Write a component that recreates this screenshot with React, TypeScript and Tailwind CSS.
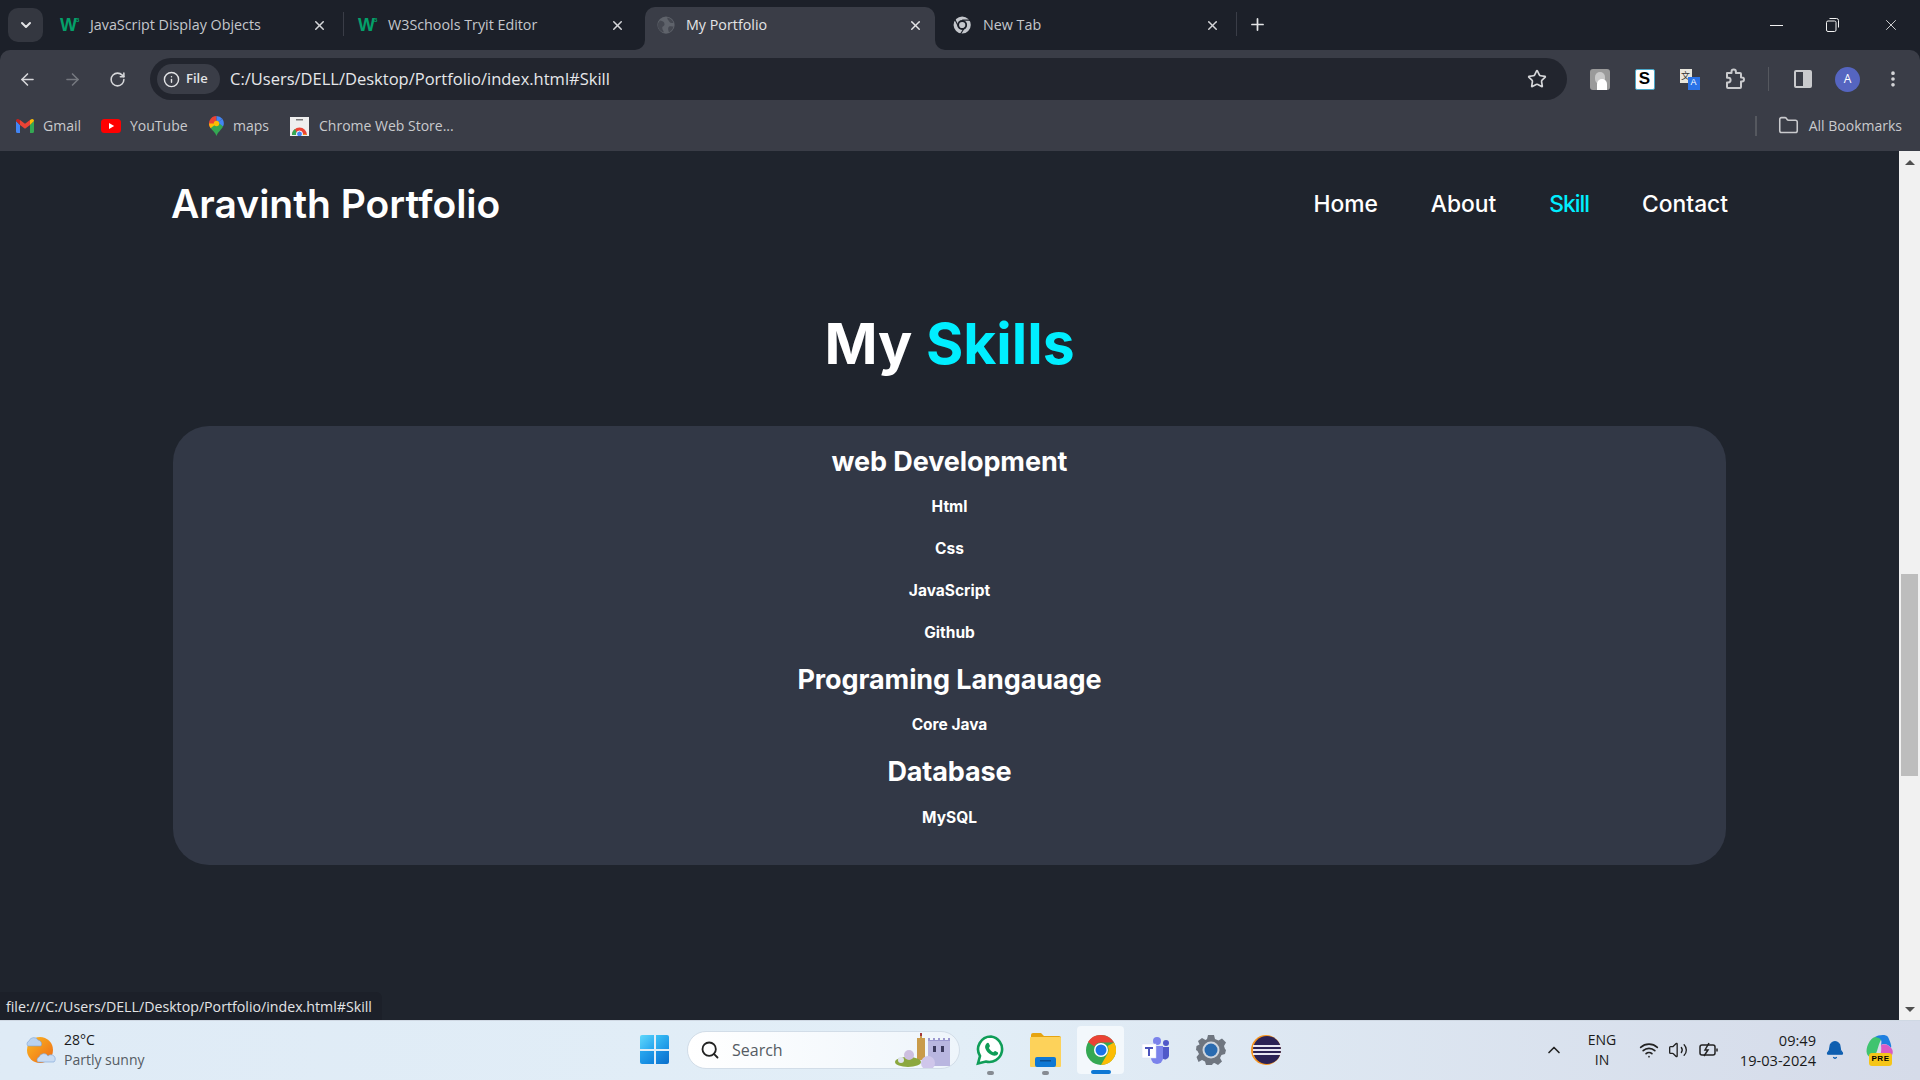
import {
  ArrowLeft,
  ArrowRight,
  RotateCw,
  Info,
  Star,
  Folder,
  Search,
  Wifi,
  Volume2,
  X,
  Plus,
  ChevronDown,
  ChevronUp,
  Bell,
  EllipsisVertical,
} from 'lucide-react';

// ===============================
// LOGOS
// ===============================

function W3Icon() {
  return (
    <span className="flex w-[20px] shrink-0 items-start font-['Liberation_Sans',sans-serif] font-bold text-[#04a06a]">
      <span className="text-[18px] leading-[18px]">W</span>
      <span className="-ml-[1px] text-[6px] leading-[8px]">3</span>
    </span>
  );
}

function ChromeMono() {
  return (
    <svg width="20" height="18" viewBox="0 0 24 22" className="shrink-0">
      <circle cx="11" cy="11" r="10.500" fill="#c4c7cc" />
      <circle cx="11" cy="11" r="6" fill="#1c2029" />
      <circle cx="11" cy="11" r="3.800" fill="#c4c7cc" />
      <path d="M11 5h10M7 14 2 4M14 14l-5 8" stroke="#1c2029" strokeWidth="1.400" />
    </svg>
  );
}

function GlobeMono() {
  return (
    <span className="flex w-[20px] shrink-0 justify-center">
      <svg width="18" height="18" viewBox="0 0 24 24">
        <circle cx="12" cy="12" r="11.500" fill="#5f636b" />
        <path d="M4 6c4 1 6 2 6 5s-3 2-3 5 2 3 2 6c-4-1-8-5-8-10 0-2 1-4 3-6ZM14 2c4 1 7 4 8 7-3 1-5 0-6-2s-3-3-2-5ZM16 14c3-1 5 0 6 0-1 4-3 6-6 8-1-3-2-6 0-8Z" fill="#454851" />
      </svg>
    </span>
  );
}

function GmailIcon() {
  return (
    <svg width="18" height="14" viewBox="0 0 18 14" className="shrink-0">
      <path d="M0 2v10.500A1.500 1.500 0 0 0 1.500 14H4V6Z" fill="#4285f4" />
      <path d="M14 6v8h2.500a1.500 1.500 0 0 0 1.500-1.500V2Z" fill="#34a853" />
      <path d="M4 6 9 9.700 14 6V1L9 4.700 4 1Z" fill="#ea4335" />
      <path d="M0 2 4 6V1L2.500.3C1.300-.4 0 .6 0 2Z" fill="#c5221f" />
      <path d="M14 1v5l4-4c0-1.400-1.300-2.400-2.500-1.700Z" fill="#fbbc04" />
    </svg>
  );
}

function YoutubeIcon() {
  return (
    <svg width="20" height="14" viewBox="0 0 20 14" className="shrink-0">
      <rect width="20" height="14" rx="3.500" fill="#f00" />
      <path d="m8 4 5.200 3L8 10Z" fill="#fff" />
    </svg>
  );
}

function MapsIcon() {
  return (
    <svg width="15" height="20" viewBox="0 0 15 20" className="shrink-0">
      <path d="M7.500 0A7.500 7.500 0 0 0 1.700 12.200L7.500 5Z" fill="#ea4335" />
      <path d="M7.500 0A7.500 7.500 0 0 1 13.300 2.800L7.500 7.500Z" fill="#4285f4" />
      <path d="M13.300 2.800A7.500 7.500 0 0 1 14 10.500L7.500 7.500Z" fill="#4285f4" />
      <path d="M1.700 12.200 7.500 5 14 10.500C12.500 14 9 15.500 7.500 20 6.500 16.500 3.500 14.500 1.700 12.200Z" fill="#34a853" />
      <path d="M1.700 12.200A7.500 7.500 0 0 1 0 7.500L7.500 7.500Z" fill="#fbbc04" />
      <circle cx="7.500" cy="7.500" r="2.700" fill="#fbbc04" />
    </svg>
  );
}

function StoreIcon() {
  return (
    <svg width="20" height="20" viewBox="0 0 20 20" className="shrink-0">
      <rect y="1" width="19" height="19" fill="#eee" />
      <rect x="6" y="3" width="7" height="1.500" fill="#777" />
      <path d="M2 19a7.500 7.500 0 0 1 15 0Z" fill="#ea4335" />
      <path d="M12 19a5 5 0 0 1 5 0Z" fill="#fbbc04" />
      <path d="M2 19a7 7 0 0 1 3-6l3 6Z" fill="#34a853" />
      <circle cx="9.500" cy="18" r="3" fill="#4285f4" stroke="#fff" />
    </svg>
  );
}

function PuzzleIcon() {
  return (
    <svg width="22" height="22" viewBox="0 0 22 22" fill="none" stroke="#c9cacd" strokeWidth="2" strokeLinejoin="round">
      <path d="M3 5h4.500V3.800a2.200 2.200 0 0 1 4.400 0V5H16a1 1 0 0 1 1 1v3.500h1a2 2 0 0 1 0 4h-1V19a1 1 0 0 1-1 1H4a1 1 0 0 1-1-1v-4.500h1.200a2.400 2.400 0 0 0 0-4.800H3Z" />
    </svg>
  );
}

function WindowsLogo() {
  return (
    <div className="grid h-[29px] w-[29px] grid-cols-2 gap-[2px]">
      <div className="rounded-tl-[2px] bg-gradient-to-br from-[#5fd8fb] to-[#21a4ee]" />
      <div className="rounded-tr-[2px] bg-gradient-to-br from-[#3cc0f5] to-[#1791e4]" />
      <div className="rounded-bl-[2px] bg-gradient-to-br from-[#2aa8ef] to-[#0f82dc]" />
      <div className="rounded-br-[2px] bg-gradient-to-br from-[#1c93e6] to-[#0a6fcb]" />
    </div>
  );
}

function WeatherIcon() {
  return (
    <svg width="31" height="30" viewBox="0 0 31 30" className="shrink-0">
      <defs>
        <linearGradient id="sun" x1="0" y1="0" x2="1" y2="1">
          <stop offset="0" stopColor="#fbb920" />
          <stop offset="1" stopColor="#ee6a18" />
        </linearGradient>
      </defs>
      <circle cx="15" cy="15" r="13" fill="url(#sun)" />
      <path d="M3 11a3 3 0 0 1 1-5 5 5 0 0 1 9-1 4 4 0 0 1 3 6Z" fill="#b9d2ef" stroke="#7ea5d6" strokeWidth=".6" />
      <path d="M13 27a3 3 0 0 1 1-5 5 5 0 0 1 9-1 4 4 0 0 1 6 6Z" fill="#c9dcf3" stroke="#7ea5d6" strokeWidth=".6" />
    </svg>
  );
}

function WhatsappIcon() {
  return (
    <svg width="30" height="32" viewBox="0 0 30 32" className="shrink-0">
      <path d="M15 2.500A12.800 12.800 0 0 0 4 22l-2 7.500 7.800-2A12.800 12.800 0 1 0 15 2.500Z" fill="#fff" stroke="#0f9d58" strokeWidth="2.600" />
      <path d="M10.500 9.500c1-1 2-.8 2.400 0l1 2.300c.2.600-.8 1.700-1 2.200 1 2 2.500 3.300 4.300 4.200.6-.3 1.500-1.500 2.100-1.200l2.300 1.200c.8.500.6 1.500 0 2.300-1.500 1.700-4 1.400-6.400.2-3-1.500-5.200-4-6-6.800-.4-1.600.3-3.400 1.300-4.400Z" fill="#0f9d58" />
    </svg>
  );
}

function FilesIcon() {
  return (
    <svg width="31" height="34" viewBox="0 0 31 34" className="shrink-0">
      <path d="M1 2a2 2 0 0 1 2-2h8l3 3h15a2 2 0 0 1 2 2v4H1Z" fill="#e6a410" />
      <rect x="0" y="4" width="31" height="30" rx="1" fill="#fdd25a" />
      <rect x="5" y="24" width="21" height="10" rx="2" fill="#0f78d4" />
      <rect x="10" y="27" width="11" height="1.500" fill="#0c4f92" />
    </svg>
  );
}

function ChromeIcon() {
  return (
    <svg width="30" height="30" viewBox="0 0 30 30" className="shrink-0">
      <circle cx="15" cy="15" r="15" fill="#34a853" />
      <path d="M15 0a15 15 0 0 1 13 7.500H15A7.500 7.500 0 0 0 8.300 11.500L2 7A15 15 0 0 1 15 0Z" fill="#ea4335" />
      <path d="M28 7.500A15 15 0 0 1 15 30l6.500-11.300A7.500 7.500 0 0 0 21.500 11Z" fill="#fbbc04" />
      <circle cx="15" cy="15" r="7" fill="#fff" />
      <circle cx="15" cy="15" r="5.500" fill="#1a73e8" />
    </svg>
  );
}

function TeamsIcon() {
  return (
    <svg width="28" height="28" viewBox="0 0 28 28" className="shrink-0">
      <circle cx="15" cy="5" r="4" fill="#7b83eb" />
      <circle cx="24" cy="7" r="3" fill="#5059c9" />
      <path d="M20 11h7v9a4 4 0 0 1-7 2Z" fill="#5059c9" />
      <path d="M9 10h12v12a6 6 0 0 1-12 0Z" fill="#7b83eb" />
      <rect x="0" y="8" width="14" height="14" fill="#fff" stroke="#d7dbf5" strokeWidth=".5" />
      <path d="M3 11h8v2H8v7H6v-7H3Z" fill="#4b53bc" />
    </svg>
  );
}

function SettingsIcon() {
  return (
    <svg width="30" height="30" viewBox="0 0 30 30" className="shrink-0">
      <path d="M12 0h6l1 4 3.500 1.500 3.500-2 4 4-2 3.500L29 14l1 1-1 4-3.500 1-1.500 3 2 3.500-4 3.500-3.500-2-1.500.5-1 1.500h-6l-1-3.500L6 25l-3.500 2-2-5L3 19l-1.500-3L0 15l.5-4 3-1.500L2 6l4-3 3.500 2L11 4Z" fill="#6f7680" />
      <circle cx="15" cy="15" r="8.500" fill="#cfd6df" />
      <circle cx="15" cy="15" r="6.500" fill="#2a6bb0" />
    </svg>
  );
}

function EclipseIcon() {
  return (
    <svg width="30" height="30" viewBox="0 0 30 30" className="shrink-0">
      <circle cx="15" cy="15" r="15" fill="#f7941e" />
      <circle cx="16" cy="15" r="14" fill="#2c2255" />
      <path d="M2 11h28M2 15h28M2 19h28" stroke="#e8e6f2" strokeWidth="2" />
    </svg>
  );
}

function CopilotIcon() {
  return (
    <div className="relative h-[32px] w-[30px] shrink-0">
      <svg width="30" height="26" viewBox="0 0 30 26">
        <path d="M2 20C0 14 5 4 10 3h10c-5 1-6 8-8 14-1 3-3 6-6 6-2 0-3-1-4-3Z" fill="#3fc46f" />
        <path d="M10 3c3-2 11-3 13 0 2 4 4 9 3 11-3-4-7-5-10-3 1-4 1-7-6-8Z" fill="#1f7fe0" />
        <path d="M16 11c4-2 8 0 11 4 2 4 0 8-4 8H13c2-1 4-4 3-12Z" fill="#d95bc5" />
      </svg>
      <span className="absolute bottom-0 left-[4px] flex h-[13px] w-[23px] items-center justify-center rounded-[3px] bg-[#f5c518] font-['Liberation_Sans',sans-serif] text-[8px] font-bold tracking-[0.5px] text-black">
        PRE
      </span>
    </div>
  );
}

// ===============================
// BROWSER CHROME
// ===============================

const tabText = "font-['Open_Sans',sans-serif] text-[14.300px] whitespace-nowrap";

function Tab({ icon, label }: { icon: React.ReactNode; label: string }) {
  return (
    <div className="flex h-[43px] w-[297px] items-center pb-[7px] pl-[14px] pr-[16px] text-[#c4c7cc]">
      {icon}
      <span className={`ml-[10px] flex-1 ${tabText}`}>{label}</span>
      <X size={15} strokeWidth={2.400} className="text-[#d5d6d9]" />
    </div>
  );
}

function ActiveTab({ icon, label }: { icon: React.ReactNode; label: string }) {
  return (
    <div className="relative mx-[4px] flex h-[43px] w-[290px] items-center rounded-t-[10px] bg-[#3a3d47] pb-[7px] pl-[11px] pr-[12px] text-[#e3e4e6]">
      {/* curved feet where the tab meets the toolbar */}
      <span className="absolute -left-[10px] bottom-0 h-[10px] w-[10px] bg-[#3a3d47]">
        <span className="block h-full w-full rounded-br-[10px] bg-[#1c2029]" />
      </span>
      <span className="absolute -right-[10px] bottom-0 h-[10px] w-[10px] bg-[#3a3d47]">
        <span className="block h-full w-full rounded-bl-[10px] bg-[#1c2029]" />
      </span>
      {icon}
      <span className={`ml-[10px] flex-1 ${tabText}`}>{label}</span>
      <X size={15} strokeWidth={2.400} className="text-[#e3e4e6]" />
    </div>
  );
}

function TabStrip() {
  return (
    <div className="flex h-[50px] items-end bg-[#1c2029]">
      <div className="mb-[8px] ml-[8px] flex h-[34px] w-[35px] items-center justify-center rounded-[10px] bg-[#343740]">
        <ChevronDown size={16} strokeWidth={3} className="text-[#e3e4e6]" />
      </div>
      <div className="ml-[3px] flex h-[50px] items-end">
        <Tab icon={<W3Icon />} label="JavaScript Display Objects" />
        <div className="mb-[14px] h-[24px] w-px bg-[#3a3d47]" />
        <Tab icon={<W3Icon />} label="W3Schools Tryit Editor" />
        <ActiveTab icon={<GlobeMono />} label="My Portfolio" />
        <Tab icon={<ChromeMono />} label="New Tab" />
        <div className="mb-[14px] h-[24px] w-px bg-[#3a3d47]" />
        <div className="mb-[16px] ml-[11px] flex items-center">
          <Plus size={19} strokeWidth={2.200} className="text-[#e3e4e6]" />
        </div>
      </div>
      <div className="mb-[16px] ml-auto flex items-center gap-[43px] pr-[20px] text-[#f2f2f2]">
        <div className="h-px w-[13px] bg-[#f2f2f2]" />
        <svg width="13" height="14" viewBox="0 0 13 14" fill="none" stroke="#f2f2f2">
          <rect x=".5" y="3" width="9.500" height="10.500" rx="1.500" />
          <path d="M3.500.5h7a2 2 0 0 1 2 2v7" />
        </svg>
        <X size={18} strokeWidth={1.100} />
      </div>
    </div>
  );
}

function ToolbarIcon({ children }: { children: React.ReactNode }) {
  return <div className="flex w-[45px] shrink-0 items-center justify-center">{children}</div>;
}

function Toolbar() {
  return (
    <div className="flex h-[50px] items-start rounded-t-[10px] bg-[#3a3d47] pl-[5px] pt-[8px]">
      <div className="flex h-[42px] w-[145px] items-center">
        <ToolbarIcon>
          <ArrowLeft size={19} strokeWidth={2} className="text-[#d6d7da]" />
        </ToolbarIcon>
        <ToolbarIcon>
          <ArrowRight size={19} strokeWidth={2} className="text-[#75787f]" />
        </ToolbarIcon>
        <ToolbarIcon>
          <RotateCw size={17} strokeWidth={2.200} className="text-[#d6d7da]" />
        </ToolbarIcon>
      </div>
      <div className="flex h-[42px] w-[1417px] items-center rounded-full bg-[#22252e] pl-[7px] pr-[20px]">
        <div className="flex h-[30px] w-[63px] items-center rounded-full bg-[#3a3d47] pl-[6px]">
          <Info size={17} strokeWidth={2} className="text-[#e3e4e6]" />
          <span className="ml-[6px] font-['Open_Sans',sans-serif] text-[13px] font-semibold text-[#e3e4e6]">File</span>
        </div>
        <span className="ml-[10px] flex-1 font-['Open_Sans',sans-serif] text-[16.500px] text-[#e6e7ea]">
          C:/Users/DELL/Desktop/Portfolio/index.html#Skill
        </span>
        <Star size={20} strokeWidth={2} className="text-[#d6d7da]" />
      </div>
      <div className="ml-[10px] flex h-[42px] flex-1 items-center">
        <ToolbarIcon>
          <div className="relative h-[21px] w-[20px] rounded-[3px] bg-[#9a9a9a]">
            <div className="absolute left-[5px] top-[3px] h-[12px] w-[10px] rounded-full bg-[#c9c9c9]" />
            <div className="absolute bottom-0 left-[7px] h-[11px] w-[10px] rounded-t-[5px] bg-white" />
          </div>
        </ToolbarIcon>
        <ToolbarIcon>
          <div className="flex h-[21px] w-[20px] items-center justify-center rounded-[2px] border border-[#4aa8c9] bg-white font-['Liberation_Sans',sans-serif] text-[17px] font-bold text-black">
            S
          </div>
        </ToolbarIcon>
        <ToolbarIcon>
          <div className="relative h-[21px] w-[20px]">
            <div className="absolute left-0 top-0 flex h-[14px] w-[12px] items-center justify-center bg-[#e8e6dc] font-['Noto_Sans_CJK_SC',sans-serif] text-[9px] text-[#333]">
              文
            </div>
            <div className="absolute bottom-0 right-0 flex h-[13px] w-[12px] items-center justify-center bg-[#2a73e8] font-['Liberation_Sans',sans-serif] text-[9px] text-white">
              A
            </div>
          </div>
        </ToolbarIcon>
        <ToolbarIcon>
          <PuzzleIcon />
        </ToolbarIcon>
        <div className="mx-[11px] h-[24px] w-px bg-[#55585f]" />
        <ToolbarIcon>
          <div className="flex h-[18px] w-[18px] overflow-hidden rounded-[2px] border-2 border-[#c9cacd]">
            <div className="flex-1" />
            <div className="w-[7px] bg-[#c9cacd]" />
          </div>
        </ToolbarIcon>
        <ToolbarIcon>
          <div className="flex h-[25px] w-[25px] items-center justify-center rounded-full bg-[#5565c0] font-['Open_Sans',sans-serif] text-[12px] text-white">
            A
          </div>
        </ToolbarIcon>
        <ToolbarIcon>
          <EllipsisVertical size={20} strokeWidth={2.400} className="text-[#d6d7da]" />
        </ToolbarIcon>
      </div>
    </div>
  );
}

function Bookmark({ icon, label, className }: { icon: React.ReactNode; label: string; className: string }) {
  return (
    <div className={`flex items-center ${className}`}>
      {icon}
      <span className="ml-[9px] whitespace-nowrap font-['Open_Sans',sans-serif] text-[14px] text-[#c9cacd]">{label}</span>
    </div>
  );
}

function BookmarksBar() {
  return (
    <div className="flex h-[51px] items-center bg-[#3a3d47] pl-[16px] pr-[18px]">
      <Bookmark icon={<GmailIcon />} label="Gmail" className="w-[85px]" />
      <Bookmark icon={<YoutubeIcon />} label="YouTube" className="w-[108px]" />
      <Bookmark icon={<MapsIcon />} label="maps" className="w-[81px]" />
      <Bookmark icon={<StoreIcon />} label="Chrome Web Store..." className="flex-1" />
      <div className="mr-[21px] h-[20px] w-[2px] bg-[#55585f]" />
      <Folder size={21} strokeWidth={1.800} className="text-[#c9cacd]" />
      <span className="ml-[10px] whitespace-nowrap font-['Open_Sans',sans-serif] text-[14px] text-[#c9cacd]">All Bookmarks</span>
    </div>
  );
}

// ===============================
// PORTFOLIO PAGE
// ===============================

const pageFont = "font-['Inter','Liberation_Sans',sans-serif]";

function NavLink({ label, active }: { label: string; active?: boolean }) {
  return (
    <span className={`text-[22.800px] font-medium ${active ? 'tracking-[-1px] text-[#00eeff]' : 'text-white'}`}>{label}</span>
  );
}

function SkillHeading({ children, className = '' }: { children: string; className?: string }) {
  return <h3 className={`flex h-[40px] items-center text-[27px] font-bold tracking-[-0.1px] text-white ${className}`}>{children}</h3>;
}

function SkillItem({ children, className = '' }: { children: string; className?: string }) {
  return <p className={`flex h-[42px] items-center text-[15.500px] font-bold text-white ${className}`}>{children}</p>;
}

function PortfolioPage() {
  return (
    <main className={`relative flex-1 bg-[#1f242d] ${pageFont}`}>
      <header className="flex h-[106px] items-center justify-between px-[171px]">
        <h1 className="text-[39px] font-semibold text-white">Aravinth Portfolio</h1>
        <nav className="flex items-center gap-[53px]">
          <NavLink label="Home" />
          <NavLink label="About" />
          <NavLink label="Skill" active />
          <NavLink label="Contact" />
        </nav>
      </header>
      <h2 className="mt-[52px] text-center text-[57px] font-bold leading-[70px] text-white">
        My <span className="text-[#00eeff]">Skills</span>
      </h2>
      <section className="mx-[173px] mt-[47px] flex h-[439px] flex-col items-center rounded-[36px] bg-[#323846] pt-[16px]">
        <SkillHeading>web Development</SkillHeading>
        <SkillItem className="mt-[4px]">Html</SkillItem>
        <SkillItem>Css</SkillItem>
        <SkillItem>JavaScript</SkillItem>
        <SkillItem>Github</SkillItem>
        <SkillHeading className="mt-[6px]">Programing Langauage</SkillHeading>
        <SkillItem className="mt-[4px]">Core Java</SkillItem>
        <SkillHeading className="mt-[6px]">Database</SkillHeading>
        <SkillItem className="mt-[5px]">MySQL</SkillItem>
      </section>
      <div className="absolute bottom-0 left-0 flex h-[28px] w-[382px] items-center rounded-tr-[6px] bg-[#1c2029] pl-[6px] pt-[1px] font-['Open_Sans',sans-serif] text-[14.200px] text-[#e3e4e6]">
        file:///C:/Users/DELL/Desktop/Portfolio/index.html#Skill
      </div>
    </main>
  );
}

function Scrollbar() {
  return (
    <div className="flex w-[21px] flex-col items-center bg-[#f1f1f1]">
      <div className="mt-[9px] h-0 w-0 border-x-[5px] border-b-[5px] border-x-transparent border-b-[#505050]" />
      <div className="mt-[409px] h-[202px] w-[17px] bg-[#bdbdbd]" />
      <div className="mt-[231px] h-0 w-0 border-x-[5px] border-t-[5px] border-x-transparent border-t-[#505050]" />
    </div>
  );
}

// ===============================
// WINDOWS TASKBAR
// ===============================

function TaskIcon({ children, dot }: { children: React.ReactNode; dot?: boolean }) {
  return (
    <div className="relative flex h-[48px] w-[45px] shrink-0 items-center justify-center">
      {children}
      {dot && <div className="absolute -bottom-[1px] left-[19px] h-[4px] w-[7px] rounded-full bg-[#868b92]" />}
    </div>
  );
}

function Taskbar() {
  return (
    <footer className="flex h-[60px] items-center border-t border-[#cfd8e3] bg-gradient-to-r from-[#dfebf6] via-[#e2eef7] to-[#d5dbe9] pb-[2px] font-['Open_Sans',sans-serif] text-[#1a1a1a]">
      <div className="flex w-[640px] items-center pl-[25px]">
        <WeatherIcon />
        <div className="ml-[8px] flex flex-col text-[14px] leading-[20px]">
          <span>28°C</span>
          <span className="text-[#555b63]">Partly sunny</span>
        </div>
      </div>
      <WindowsLogo />
      <div className="relative ml-[18px] flex h-[38px] w-[273px] items-center rounded-full border border-[#d2dde8] bg-gradient-to-r from-white to-[#eef5fb] pl-[12px]">
        <Search size={20} strokeWidth={2.200} className="text-[#222]" />
        <span className="ml-[12px] text-[16px] text-[#555b63]">Search</span>
        <svg width="58" height="36" viewBox="0 0 58 36" className="absolute bottom-0 right-[6px]">
          <rect x="33" y="9" width="22" height="25" fill="#b9b6e0" />
          <path d="M33 9h22V6h-2v2h-3V6h-2v2h-3V6h-2v2h-3V6h-2v2h-3V6h-2Z" fill="#9c98cf" />
          <rect x="38" y="14" width="3" height="6" fill="#3c3a5e" />
          <rect x="46" y="14" width="3" height="6" fill="#3c3a5e" />
          <path d="M22 6h8v22h-8ZM25 1h2v5h-2Z" fill="#c99b4a" />
          <rect x="25" y="1" width="2" height="3" fill="#a53a3a" />
          <ellipse cx="13" cy="30" rx="13" ry="5" fill="#8ca83f" />
          <circle cx="14" cy="23" r="5" fill="#cdbfe0" />
          <circle cx="6" cy="28" r="3" fill="#dfe3ee" />
          <circle cx="33" cy="31" r="7" fill="#cfc6ea" />
        </svg>
      </div>
      <div className="ml-[8px] flex items-center gap-[10px]">
        <TaskIcon dot>
          <WhatsappIcon />
        </TaskIcon>
        <TaskIcon dot>
          <FilesIcon />
        </TaskIcon>
        <div className="relative -mx-[1px] flex h-[48px] w-[47px] shrink-0 items-center justify-center rounded-[4px] bg-[#f3f8fc]">
          <ChromeIcon />
          <div className="absolute bottom-0 left-[14px] h-[4px] w-[20px] rounded-full bg-[#0f78d4]" />
        </div>
        <TaskIcon>
          <TeamsIcon />
        </TaskIcon>
        <TaskIcon>
          <SettingsIcon />
        </TaskIcon>
        <TaskIcon>
          <EclipseIcon />
        </TaskIcon>
      </div>
      <div className="ml-auto flex items-center pr-[25px]">
        <ChevronUp size={20} strokeWidth={2} className="text-[#222]" />
        <div className="ml-[14px] flex w-[48px] flex-col items-center text-[14px] leading-[20px]">
          <span>ENG</span>
          <span>IN</span>
        </div>
        <Wifi size={20} strokeWidth={2} className="ml-[13px] text-[#222]" />
        <Volume2 size={20} strokeWidth={1.600} className="ml-[9px] text-[#222]" />
        <svg width="20" height="16" viewBox="0 0 20 16" fill="none" stroke="#222" strokeWidth="1.500" className="ml-[11px]">
          <rect x="1" y="3" width="15" height="10" rx="2" />
          <path d="M18 6.500v3M5 14 9 8H6l4-7" />
        </svg>
        <div className="ml-[17px] flex w-[80px] flex-col items-end text-[14.600px] leading-[20px]">
          <span>09:49</span>
          <span className="whitespace-nowrap">19-03-2024</span>
        </div>
        <Bell size={20} fill="#0f5fb0" strokeWidth={1.500} className="ml-[9px] text-[#0f5fb0]" />
        <div className="ml-[20px]">
          <CopilotIcon />
        </div>
      </div>
    </footer>
  );
}

export default function App() {
  return (
    <div className="flex h-screen w-[1920px] flex-col overflow-hidden bg-[#1c2029]">
      <TabStrip />
      <Toolbar />
      <BookmarksBar />
      <div className="flex min-h-0 flex-1">
        <PortfolioPage />
        <Scrollbar />
      </div>
      <Taskbar />
    </div>
  );
}
